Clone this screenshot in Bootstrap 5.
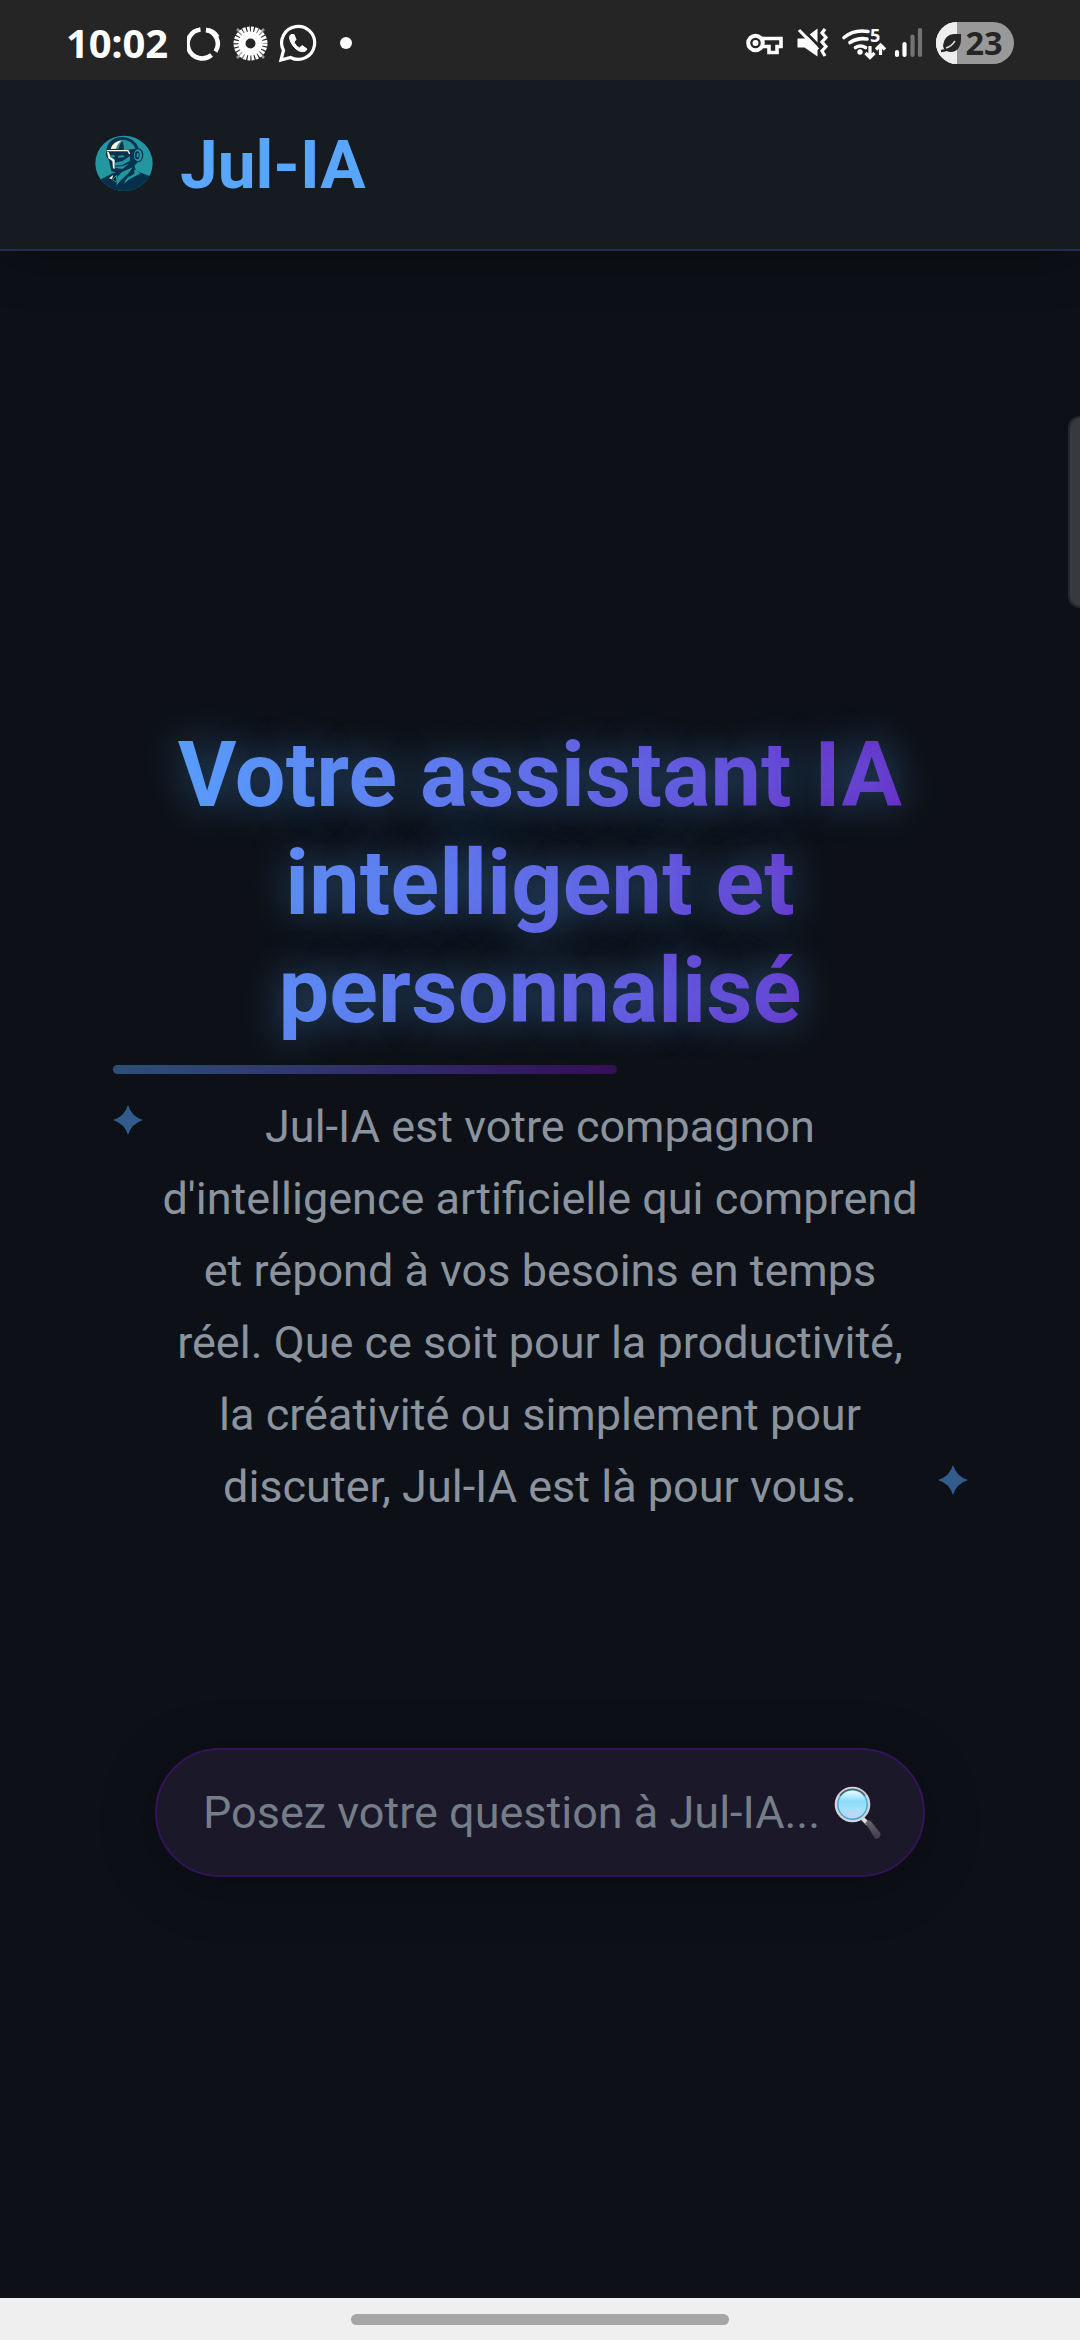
<!DOCTYPE html>
<html lang="fr" data-bs-theme="dark">
<head>
<meta charset="utf-8">
<meta name="viewport" content="width=device-width, initial-scale=1">
<title>Jul-IA</title>
<link href="https://cdn.jsdelivr.net/npm/bootstrap@5.3.0/dist/css/bootstrap.min.css" rel="stylesheet">
<style>
body{background:#0d1117;font-family:Roboto,"Liberation Sans",sans-serif;height:2340px;overflow:hidden}
.statusbar{height:80px;background:#252525;padding:6px 66px 0 66px;color:#fff;font-family:"Open Sans",sans-serif;z-index:3}
.clock{font-size:40px;font-weight:700;line-height:1;letter-spacing:-.2px}
.notif{margin-left:19px}
.topbar{height:171px;background:#161b22;border-bottom:2px solid #20304a;box-shadow:0 9px 45px rgba(0,0,0,.3);padding:0 95px;z-index:2}
.avatar{margin-top:-2px}
.brand{font-size:67.5px;font-weight:700;line-height:1;color:#58a6ff;margin-left:27px}
.hero{padding:471px 113px 0}
.hero-title{font-size:90px;font-weight:700;line-height:108px;letter-spacing:.18px;width:840px;margin:0 auto;background:linear-gradient(100deg,#58a6ff,#6562e4 50%,#6c14b8);-webkit-background-clip:text;background-clip:text;color:transparent;text-shadow:0 0 42px rgba(88,166,255,.45)}
.rule{width:504px;height:9px;border-radius:4.5px;margin-top:19px;opacity:.42;background:linear-gradient(90deg,#58a6ff,#6a0dad)}
.intro{margin-top:17px;font-size:45px;line-height:72px;color:#8b949e}
.star{width:30px;height:30px;fill:#58a6ff;opacity:.5}
.star-a{top:14px;left:0}
.star-b{bottom:28px;right:-1px}
.ask{width:770px;height:129px;margin-top:225px;border:2px solid #35135a;border-radius:65px;background:#1a1829;box-shadow:0 9px 56px rgba(0,0,0,.3);padding:0 41px 0 46px}
.ask input{font-size:45px;line-height:1.2;color:#c9d1d9}
.ask input::placeholder{color:#757d88;opacity:1}
.edge{right:0;top:416px;width:12px;height:192px;background:#36393d;border:2px solid #25282c;border-right:0;border-radius:14px 0 0 14px}
.navpad{height:42px;background:#efefef;padding-top:16px}
.navpad i{width:378px;height:11px;border-radius:6px;background:#a6a6a6}
</style>
</head>
<body class="d-flex flex-column position-relative">
<div class="statusbar d-flex align-items-center flex-shrink-0">
  <span class="clock">10:02</span>
  <svg class="notif me-auto" width="167" height="40" viewBox="187 23 167 40" fill="none" stroke="#fff">
    <path d="M206 30A14 14 0 0 1 215.500 51.500M211.500 55A14.500 14.500 0 1 1 200.500 29.500" stroke-width="4.500"/>
    <path d="M206 30a14 14 0 0 1 11.500 7" stroke-width="4.500"/>
    <path d="M237 29l8 8M264 29l-8 8M237 58l8-8M264 58l-8-8M243 28l4 8M258 28l-4 8M243 59l4-8M258 59l-4-8" stroke="#999" stroke-width="2.500"/>
    <circle cx="250.500" cy="43.500" r="12" stroke-width="10" stroke-dasharray="2.200 .942"/>
    <circle cx="250.500" cy="43.500" r="8.500" stroke-width="7"/>
    <path d="M281 60l2.500-9.500A16.500 16.500 0 1 1 290.500 57.500Z" stroke-width="3.200"/>
    <path d="M291 34.500c-4 3 1.500 11.500 5 14.500s9.500 4 11 0l-5-3.500-2.500 2.500c-2.500-1.500-4.500-3.500-5.500-6l2-2.500-2-5z" fill="#fff" stroke-width="1"/>
    <circle cx="346" cy="43" r="6" fill="#fff" stroke="none"/>
  </svg>
  <svg width="268" height="46" viewBox="746 20 268 46" fill="none" stroke="#fff">
    <circle cx="755.500" cy="43" r="7.300" stroke-width="4"/><circle cx="755.500" cy="43" r="3" fill="#fff" stroke="none"/>
    <path d="M762 38.500h19v8h-4v6h-8v-6h-7" stroke-width="3.600"/>
    <path d="M797.500 38.500h7l13-10v28l-13-9h-7z" fill="#fff" stroke="none"/>
    <path d="M800.500 27l19 19.500" stroke="#252525" stroke-width="3"/>
    <path d="M799 30l19 19.500" stroke-width="3.200"/>
    <path d="M825 29l-3 4 4 4.500-4 4.500 4 4.500-4 4.500 3 5" stroke-width="3.200"/>
    <g stroke-width="3.600" stroke-linecap="round"><path d="M844 37.500q10-8.500 24-6"/><path d="M850 42.500q8-5 17-3.500"/><path d="M855.500 47.500q5-3 10 0"/></g>
    <circle cx="860" cy="52" r="2.700" fill="#fff" stroke="none"/>
    <path d="M870 46v11m-4.500-4 4.500 4.500 4.500-4.500M880.500 55v-9m-4.500 3.500 4.500-4.500 4.500 4.500" stroke-width="3.200"/>
    <text x="870" y="42" font-size="18" font-weight="700" fill="#fff" stroke="none">5</text>
    <g stroke-width="4.200" stroke-linecap="round"><path d="M897 52v3M904.500 44v11"/><path d="M912.500 36.500V55M920 30v25" stroke="#737373"/></g>
    <path d="M957 22h36a21 21 0 0 1 0 42h-36a21 21 0 0 1 0-42" fill="#999" stroke="none"/>
    <path d="M957 22h-3v42h3a21 21 0 0 1 0-42" fill="#eee" stroke="none"/>
    <path d="M957 22a21 21 0 0 0 0 42z" fill="#eee" stroke="none"/>
    <path d="M943 46c1-8 5-12 12-12h6v5c0 9-5 13-10 13-3 0-5-1-7-3z" fill="#252525" stroke="none"/>
    <path d="M941 51c8 0 10-5 14-9" stroke="#252525" stroke-width="2.500"/><path d="M946 48c4-1 7-4 9-7" stroke="#ddd" stroke-width="1.500"/>
    <text x="965.500" y="54.500" font-size="32.500" font-weight="700" fill="#252525" stroke="none">23</text>
  </svg>
</div>
<header class="topbar d-flex align-items-center flex-shrink-0 position-relative">
  <svg class="avatar" width="58" height="57" viewBox="45 60 174 171">
    <defs><clipPath id="disc"><ellipse cx="132" cy="145" rx="86" ry="83"/></clipPath></defs>
    <g clip-path="url(#disc)">
      <rect x="45" y="60" width="174" height="171" fill="#2397a0"/>
      <path d="M60 194l35-18 18-5-2-12 52-8 5 16 50 20v50H55z" fill="#052f4a"/>
      <path d="M78 108q6-40 50-42 36 2 48 34 14 2 14 22-1 18-16 20l-12 10-48 24-20-8-8-34-8-10z" fill="#073350"/>
      <path d="M125 74q31 0 42 27l-36 5q2-18-6-32M103 102q7-22 28-28-13 12-15 27z" fill="#2b929b"/>
      <path d="M92 102q6-22 34-27-14 11-18 26z" fill="#fff5dd"/>
      <path d="M80 107h64l5 10" stroke="#fff5dd" stroke-width="4" fill="none"/>
      <path d="M81 110l4 20 12 8 2 22 5 2v-28l-11-7-7-16z" fill="#fff5dd"/>
      <path d="M89 122l12-2 5 5-13 3zM114 122l16-1 4 5-20 2z" fill="#2b929b"/>
      <path d="M105 143l23-5 22-15v14l-24 13-22 2zM103 155l24-1 20-8-20 16-19-3z" fill="#2397a0"/>
      <ellipse cx="174" cy="121" rx="12" ry="18" fill="#2397a0"/><ellipse cx="172" cy="121" rx="7" ry="12" fill="#073350"/><ellipse cx="173" cy="121" rx="3" ry="7" fill="#2397a0"/>
      <path d="M112 185l14-14 33-15-15 20-24 22-11 14zM163 163l19 12-36 19-14 12 10-17 21-13z" fill="#2397a0"/>
      <path d="M87 190l13-10-4 13z" fill="#fff5dd"/><path d="M98 194l12-13-2 20zM126 178l-13 26M147 184l-13 18" stroke="#2397a0" stroke-width="3"/>
    </g>
  </svg>
  <span class="brand">Jul-IA</span>
</header>
<main class="hero flex-grow-1 d-flex flex-column">
  <h1 class="hero-title text-center">Votre assistant IA intelligent et personnalisé</h1>
  <div class="rule flex-shrink-0"></div>
  <div class="intro position-relative">
    <svg class="star star-a position-absolute" viewBox="0 0 30 30"><path d="M15 0Q18.500 11.500 30 15 18.500 18.500 15 30 11.500 18.500 0 15 11.500 11.500 15 0"/></svg>
    <p class="text-center mb-0">Jul-IA est votre compagnon<br>d'intelligence artificielle qui comprend<br>et répond à vos besoins en temps<br>réel. Que ce soit pour la productivité,<br>la créativité ou simplement pour<br>discuter, Jul-IA est là pour vous.</p>
    <svg class="star star-b position-absolute" viewBox="0 0 30 30"><path d="M15 0Q18.500 11.500 30 15 18.500 18.500 15 30 11.500 18.500 0 15 11.500 11.500 15 0"/></svg>
  </div>
  <form class="ask d-flex align-items-center align-self-center flex-shrink-0">
    <input class="form-control border-0 bg-transparent shadow-none p-0 flex-grow-1" type="text" placeholder="Posez votre question à Jul-IA...">
    <svg class="flex-shrink-0" width="48" height="54" viewBox="0 0 48 54">
      <defs>
        <linearGradient id="lens" x1="0" y1="0" x2="0" y2="1"><stop offset="0" stop-color="#e9fbff"/><stop offset=".12" stop-color="#e0f6fd"/><stop offset=".4" stop-color="#8cdcfa"/><stop offset=".65" stop-color="#a4e0fb"/><stop offset="1" stop-color="#d9c9f5"/></linearGradient>
        <linearGradient id="grip" x1="0" y1="0" x2="0" y2="1"><stop offset="0" stop-color="#666"/><stop offset="1" stop-color="#49364f"/></linearGradient>
      </defs>
      <path d="M28 32l6 6" stroke="#ddd" stroke-width="4"/>
      <path d="M31.500 37q2.500-3.500 5-2L46 47q1 5-4.500 5.500Z" fill="url(#grip)" stroke="#555" stroke-width=".5"/>
      <circle cx="18.500" cy="18.500" r="16.500" fill="url(#lens)" stroke="#d8d3d6" stroke-width="2.600"/>
      <circle cx="18.500" cy="18.500" r="14.700" fill="none" stroke="#3aa9d4" stroke-width="1.400"/>
      <path d="M6 9.500a15.500 15.500 0 0 1 25 0" fill="none" stroke="#4d5d66" stroke-width="1.500"/>
    </svg>
  </form>
</main>
<div class="edge position-absolute"></div>
<footer class="navpad d-flex justify-content-center flex-shrink-0"><i></i></footer>
<script src="https://cdn.jsdelivr.net/npm/bootstrap@5.3.0/dist/js/bootstrap.bundle.min.js"></script>
</body>
</html>
